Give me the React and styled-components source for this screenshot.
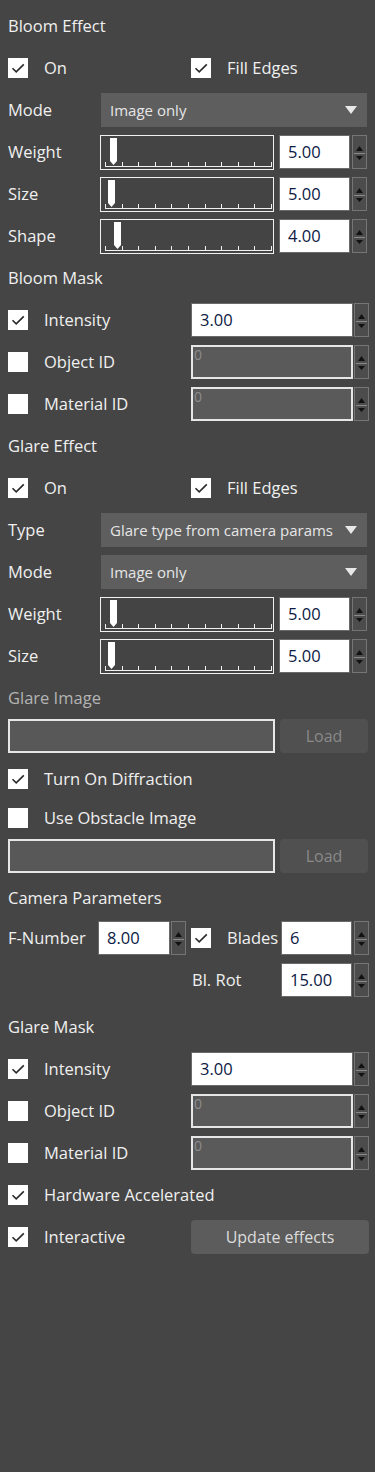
import React from "react";
import styled, { createGlobalStyle } from "styled-components";

const Global = createGlobalStyle`
  html, body { margin: 0; padding: 0; background: #454545; }
  body { font-family: "Open Sans", "Noto Sans", sans-serif; color: #f0f0f0; }
`;

const Panel = styled.div`
  width: 375px;
  min-height: 1472px;
  box-sizing: border-box;
  background: #454545;
  padding: 5px 6px 0 8px;
  display: flex;
  flex-direction: column;
`;

const Row = styled.div`
  display: flex;
  align-items: center;
  height: ${(p) => p.$h || 42}px;
  margin-top: ${(p) => p.$mt || 0}px;
  flex-shrink: 0;
`;

const Header = styled.div`
  font-size: 16.5px;
  color: ${(p) => (p.$dim ? "#b4b4b4" : "#f0f0f0")};
  line-height: 22px;
`;

const Label = styled.div`
  font-size: 16.5px;
  line-height: 22px;
  color: #f0f0f0;
  width: ${(p) => (p.$w ? `${p.$w}px` : "auto")};
  flex-shrink: 0;
  white-space: nowrap;
  margin-left: ${(p) => p.$ml || 0}px;
`;

const CheckCell = styled.div`
  display: flex;
  align-items: center;
  width: ${(p) => (p.$w ? `${p.$w}px` : "auto")};
  flex-shrink: 0;
`;

const Box = styled.div`
  width: 20px;
  height: 20px;
  margin-left: ${(p) => p.$ml || 0}px;
  background: #fff;
  flex-shrink: 0;
  display: flex;
  align-items: center;
  justify-content: center;
`;

const CheckText = styled.span`
  font-size: 16.5px;
  line-height: 22px;
  color: #f0f0f0;
  margin-left: 16px;
  white-space: nowrap;
`;

const Select = styled.div`
  width: 266px;
  height: 34px;
  background: #5e5e5e;
  display: flex;
  align-items: center;
  justify-content: space-between;
  padding: 0 10px 0 9px;
  box-sizing: border-box;
  font-size: 15px;
  color: #e6e6e6;
`;

const SliderBox = styled.div`
  width: 174px;
  height: 35px;
  box-sizing: border-box;
  border: 1px solid #f0f0f0;
  background: #444;
  flex-shrink: 0;
`;

const NumBox = styled.div`
  width: ${(p) => p.$w}px;
  height: 34px;
  box-sizing: border-box;
  margin-left: ${(p) => p.$ml || 0}px;
  background: ${(p) => (p.$disabled ? "#5a5a5a" : "#fff")};
  border: ${(p) => (p.$disabled ? "2px solid #e6e6e6" : "1px solid #6a6a6a")};
  color: ${(p) => (p.$disabled ? "#8c8c8c" : "#0c1a44")};
  font-size: ${(p) => (p.$disabled ? "14px" : "16.5px")};
  display: flex;
  align-items: ${(p) => (p.$disabled ? "flex-start" : "center")};
  padding-left: ${(p) => (p.$disabled ? "1px" : "8px")};
  line-height: ${(p) => (p.$disabled ? "16px" : "22px")};
  flex-shrink: 0;
`;

const SpinBox = styled.div`
  width: 15px;
  height: 34px;
  margin-left: ${(p) => p.$ml || 2}px;
  box-sizing: border-box;
  border: 1px solid #757575;
  background: #4c4c4c;
  flex-shrink: 0;
  display: flex;
`;

const FileBox = styled.div`
  width: 267px;
  height: 34px;
  box-sizing: border-box;
  border: 2px solid #e6e6e6;
  background: #585858;
  flex-shrink: 0;
`;

const Button = styled.div`
  width: ${(p) => p.$w}px;
  height: 34px;
  margin-left: ${(p) => p.$ml || 0}px;
  border-radius: 4px;
  background: ${(p) => (p.$disabled ? "#505050" : "#5c5c5c")};
  color: ${(p) => (p.$disabled ? "#8a8a8a" : "#dcdcdc")};
  font-size: 16px;
  display: flex;
  align-items: center;
  justify-content: center;
  flex-shrink: 0;
`;

const Check = ({ on, ml }) => (
  <Box $ml={ml}>
    {on && (
      <svg width="20" height="20" viewBox="0 0 20 20">
        <path d="M4.5 10.2 L8.2 13.8 L15.8 6.4" fill="none" stroke="#2a2a2a" strokeWidth="1.6" />
      </svg>
    )}
  </Box>
);

const CheckRow = ({ on, label, w }) => (
  <CheckCell $w={w}>
    <Check on={on} />
    <CheckText>{label}</CheckText>
  </CheckCell>
);

const Spinner = ({ ml }) => (
  <SpinBox $ml={ml}>
    <svg width="13" height="32" viewBox="0 0 13 32">
      <path d="M3 15 L6.5 10 L10 15 Z" fill="#111" />
      <line x1="1" y1="17.5" x2="12" y2="17.5" stroke="#8a8a8a" strokeWidth="1" />
      <path d="M3 20 L10 20 L6.5 24 Z" fill="#111" />
    </svg>
  </SpinBox>
);

const Slider = ({ pos }) => {
  const ticks = Array.from({ length: 11 }, (_, i) => 4 + i * 16.6);
  return (
    <SliderBox>
      <svg width="172" height="33" viewBox="0 0 172 33" style={{ display: "block" }}>
        <line x1="4" y1="30.5" x2="170" y2="30.5" stroke="#f0f0f0" strokeWidth="1" />
        {ticks.map((x) => (
          <line key={x} x1={Math.round(x) + 0.5} y1="26" x2={Math.round(x) + 0.5} y2="31" stroke="#f0f0f0" strokeWidth="1" />
        ))}
        <path d={`M${pos} 2 L${pos + 7} 2 L${pos + 7} 25 L${pos + 3.5} 29 L${pos} 25 Z`} fill="#fff" />
      </svg>
    </SliderBox>
  );
};

const Arrow = () => (
  <svg width="12" height="8" viewBox="0 0 12 8">
    <path d="M0 0 L12 0 L6 8 Z" fill="#e8e8e8" />
  </svg>
);

const SelectRow = ({ label, value }) => (
  <Row>
    <Label $w={93}>{label}</Label>
    <Select>
      <span>{value}</span>
      <Arrow />
    </Select>
  </Row>
);

const SliderRow = ({ label, value, pos }) => (
  <Row>
    <Label $w={92}>{label}</Label>
    <Slider pos={pos} />
    <NumBox $w={71} $ml={5}>{value}</NumBox>
    <Spinner ml={2} />
  </Row>
);

const MaskRow = ({ on, label, value, disabled }) => (
  <Row>
    <CheckRow on={on} label={label} w={183} />
    <NumBox $w={162} $disabled={disabled}>{value}</NumBox>
    <Spinner ml={1} />
  </Row>
);

const EffectToggles = () => (
  <Row>
    <CheckRow on label="On" w={183} />
    <CheckRow on label="Fill Edges" />
  </Row>
);

const FileRow = ({ mt }) => (
  <Row $h={34} $mt={mt}>
    <FileBox />
    <Button $w={88} $ml={5} $disabled>Load</Button>
  </Row>
);

export default function App() {
  return (
    <>
      <Global />
      <Panel>
        <Row><Header>Bloom Effect</Header></Row>
        <EffectToggles />
        <SelectRow label="Mode" value="Image only" />
        <SliderRow label="Weight" value="5.00" pos={9} />
        <SliderRow label="Size" value="5.00" pos={7} />
        <SliderRow label="Shape" value="4.00" pos={13} />
        <Row><Header>Bloom Mask</Header></Row>
        <MaskRow on label="Intensity" value="3.00" />
        <MaskRow label="Object ID" value="0" disabled />
        <MaskRow label="Material ID" value="0" disabled />
        <Row><Header>Glare Effect</Header></Row>
        <EffectToggles />
        <SelectRow label="Type" value="Glare type from camera params" />
        <SelectRow label="Mode" value="Image only" />
        <SliderRow label="Weight" value="5.00" pos={9} />
        <SliderRow label="Size" value="5.00" pos={7} />
        <Row><Header $dim>Glare Image</Header></Row>
        <FileRow />
        <Row $mt={5}><CheckRow on label="Turn On Diffraction" /></Row>
        <Row $h={36}><CheckRow label="Use Obstacle Image" /></Row>
        <FileRow mt={3} />
        <Row $h={38} $mt={6}><Header>Camera Parameters</Header></Row>
        <Row>
          <Label $w={90}>F-Number</Label>
          <NumBox $w={72}>8.00</NumBox>
          <Spinner ml={1} />
          <Check on ml={5} />
          <Label $ml={16} $w={54}>Blades</Label>
          <NumBox $w={71}>6</NumBox>
          <Spinner ml={2} />
        </Row>
        <Row>
          <Label $ml={184} $w={89}>Bl. Rot</Label>
          <NumBox $w={71}>15.00</NumBox>
          <Spinner ml={2} />
        </Row>
        <Row $mt={5}><Header>Glare Mask</Header></Row>
        <MaskRow on label="Intensity" value="3.00" />
        <MaskRow label="Object ID" value="0" disabled />
        <MaskRow label="Material ID" value="0" disabled />
        <Row><CheckRow on label="Hardware Accelerated" /></Row>
        <Row>
          <CheckRow on label="Interactive" w={183} />
          <Button $w={178}>Update effects</Button>
        </Row>
      </Panel>
    </>
  );
}
